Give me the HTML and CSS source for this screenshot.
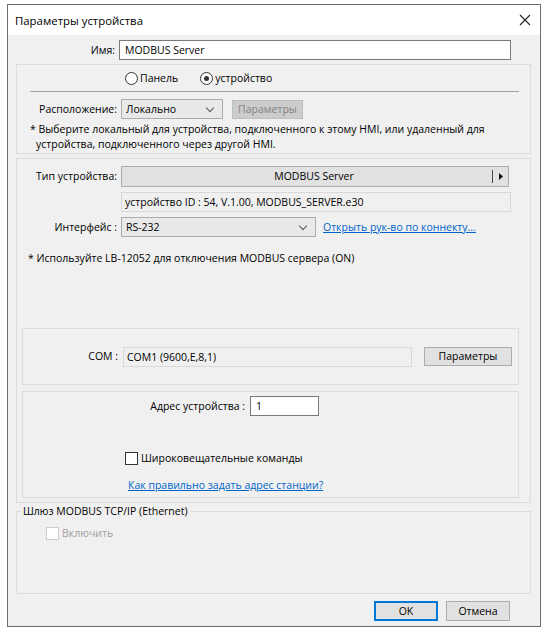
FILE: index.html
```html
<!DOCTYPE html>
<html lang="ru">

<head>
  <meta charset="UTF-8" />
  <title>Параметры устройства</title>
  <link rel="stylesheet" href="styles.css">
</head>

<body>

  <div class="window">
    <div class="titlebar">
      <span class="title">Параметры устройства</span>
      <svg class="close" width="12" height="12" viewBox="0 0 12 12">
        <path d="M1 1 L11 11 M11 1 L1 11" stroke="#222" stroke-width="1.1" fill="none" />
      </svg>
    </div>

    <div class="dialog-body">
      <div class="name-row">
        <label class="name-label">Имя:</label>
        <div class="textbox name-input">MODBUS Server</div>
      </div>

      <!-- location -->
      <div class="group group-location">
        <div class="radio-row">
          <span class="radio"></span><span class="radio-text">Панель</span>
          <span class="radio checked"></span><span class="radio-text">устройство</span>
        </div>
        <div class="separator"></div>
        <div class="loc-row">
          <span class="loc-label">Расположение:</span>
          <div class="combo loc-combo">Локально<span class="chev"></span></div>
          <div class="btn btn-disabled loc-btn">Параметры</div>
        </div>
        <p class="note loc-note">* Выберите локальный для устройства, подключенного к этому HMI, или удаленный для<br>устройства, подключенного через другой HMI.</p>
      </div>

      <!-- device -->
      <div class="group group-device">
        <div class="row type-row">
          <span class="field-label">Тип устройства:</span>
          <div class="btn type-btn">
            <span class="type-name">MODBUS Server</span>
            <span class="type-arrow">
              <svg width="4" height="7" viewBox="0 0 4 7"><path d="M0 0 L4 3.5 L0 7 Z" fill="#111" /></svg>
            </span>
          </div>
        </div>
        <div class="info-field device-info">устройство ID : 54, V.1.00, MODBUS_SERVER.e30</div>
        <div class="row iface-row">
          <span class="field-label">Интерфейс :</span>
          <div class="combo iface-combo">RS-232<span class="chev"></span></div>
          <a class="link iface-link" href="#">Открыть рук-во по коннекту...</a>
        </div>
        <p class="note lb-note">* Используйте LB-12052 для отключения MODBUS сервера (ON)</p>

        <div class="subgroup com-box">
          <span class="com-label">COM :</span>
          <div class="info-field com-field">COM1 (9600,E,8,1)</div>
          <div class="btn com-btn">Параметры</div>
        </div>

        <div class="subgroup addr-box">
          <div class="addr-row">
            <span class="addr-label">Адрес устройства :</span>
            <div class="textbox addr-input">1</div>
          </div>
          <div class="check-row">
            <span class="checkbox"></span><span>Широковещательные команды</span>
          </div>
          <a class="link addr-link" href="#">Как правильно задать адрес станции?</a>
        </div>
      </div>

      <!-- gateway -->
      <fieldset class="gateway">
        <legend>Шлюз MODBUS TCP/IP (Ethernet)</legend>
        <div class="check-row disabled">
          <span class="checkbox"></span><span>Включить</span>
        </div>
      </fieldset>

      <div class="footer">
        <div class="btn btn-default">OK</div>
        <div class="btn footer-btn">Отмена</div>
      </div>
    </div>
  </div>

</body>

</html>
```

FILE: styles.css
```css
body {
  margin: 0;
  background: #fff;
  font-family: "Open Sans", "Noto Sans", sans-serif;
  font-size: 10.5px;
  line-height: 15px;
  color: #000;
}

.window {
  margin: 4px 0 0 7px;
  width: 532px;
  height: 621px;
  border: 1px solid #6e6e6e;
  display: flex;
  flex-direction: column;
}

.titlebar {
  height: 30px;
  background: #fff;
  display: flex;
  align-items: center;
  justify-content: space-between;
  padding: 0 9px 0 7px;
}

.title {
  font-size: 11.4px;
}

.dialog-body {
  flex: 1;
  background: #f0f0f0;
  padding: 5px 9px 0 8px;
}

/* common controls */
.textbox {
  background: #fff;
  border: 1px solid #7a7a7a;
  height: 18px;
  line-height: 18px;
  padding-left: 5px;
}

.combo {
  position: relative;
  background: #e9e9e9;
  border: 1px solid #adadad;
  height: 18px;
  line-height: 19px;
  padding-left: 4px;
}

.chev {
  position: absolute;
  right: 9px;
  top: 5px;
  width: 5px;
  height: 5px;
  border-right: 1px solid #555;
  border-bottom: 1px solid #555;
  transform: rotate(45deg);
}

.btn {
  background: #e1e1e1;
  border: 1px solid #adadad;
  text-align: center;
  height: 17px;
  line-height: 17px;
}

.btn-disabled {
  background: #cccccc;
  border-color: #bfbfbf;
  color: #838383;
}

.link {
  color: #0066cc;
  text-decoration: underline;
}

.info-field {
  background: #f0f0f0;
  border: 1px solid #d9d9d9;
  height: 18px;
  line-height: 18px;
  padding-left: 3px;
}

.group,
.subgroup {
  border: 1px solid #dcdcdc;
}

.field-label {
  width: 100px;
  text-align: right;
  padding-right: 4px;
  flex-shrink: 0;
}

.note {
  margin: 0;
  line-height: 15px;
}

/* name row */
.name-row {
  display: flex;
  align-items: center;
  height: 20px;
}

.name-label {
  width: 99px;
  text-align: right;
  padding-right: 4px;
}

.name-input {
  width: 385px;
}

/* location group */
.group-location {
  margin-top: 4px;
  height: 88px;
}

.radio-row {
  display: flex;
  align-items: center;
  height: 22px;
  padding-left: 108px;
  margin-top: 2px;
}

.radio {
  width: 11px;
  height: 11px;
  border: 1px solid #333;
  border-radius: 50%;
  background: #fff;
  position: relative;
  margin-right: 2px;
}

.radio.checked::after {
  content: "";
  position: absolute;
  left: 3px;
  top: 3px;
  width: 5px;
  height: 5px;
  border-radius: 50%;
  background: #333;
}

.radio-text {
  margin-right: 22px;
}

.separator {
  height: 1px;
  background: #a0a0a0;
  margin: 2px 11px 0 13px;
}

.loc-row {
  display: flex;
  align-items: center;
  margin-top: 7px;
}

.loc-label {
  width: 100px;
  text-align: right;
  padding-right: 4px;
}

.loc-combo {
  width: 96px;
}

.loc-btn {
  width: 69px;
  margin-left: 9px;
}

.loc-note {
  margin-top: 3px;
  text-indent: -6px;
  padding-left: 19px;
}

/* device group */
.group-device {
  margin-top: 4px;
  height: 343px;
}

.row {
  display: flex;
  align-items: center;
}

.type-row {
  margin-top: 7px;
}

.type-btn {
  width: 386px;
  height: 19px;
  line-height: 19px;
  display: flex;
}

.type-name {
  flex: 1;
  padding-left: 14px;
}

.type-arrow {
  width: 15px;
  border-left: 1px solid #444;
  margin: 3px 0;
  display: flex;
  align-items: center;
  justify-content: center;
}

.device-info {
  margin: 5px 19px 0 104px;
}

.iface-row {
  margin-top: 5px;
}

.iface-combo {
  width: 189px;
}

.iface-link {
  margin-left: 7px;
}

.lb-note {
  margin-top: 14px;
  padding-left: 11px;
}

.com-box {
  margin: 62px 11px 0 5px;
  height: 55px;
  display: flex;
  align-items: center;
}

.com-label {
  width: 95px;
  text-align: right;
  padding-right: 5px;
}

.com-field {
  width: 284px;
}

.com-btn {
  width: 86px;
  margin-left: 12px;
}

.addr-box {
  margin: 6px 11px 0 5px;
  height: 105px;
}

.addr-row {
  display: flex;
  align-items: center;
  margin-top: 4px;
}

.addr-label {
  width: 222px;
  text-align: right;
  padding-right: 5px;
}

.addr-input {
  width: 62px;
}

.check-row {
  display: flex;
  align-items: center;
  margin-top: 35px;
  padding-left: 102px;
}

.checkbox {
  width: 11px;
  height: 11px;
  border: 1px solid #333;
  background: #fff;
  margin-right: 3px;
}

.addr-link {
  display: block;
  margin: 12px 0 0 105px;
}

/* gateway */
.gateway {
  box-sizing: border-box;
  margin: 1px 0 0;
  padding: 0;
  border: 1px solid #dcdcdc;
  height: 90px;
}

.gateway legend {
  margin-left: 4px;
  padding: 0 2px;
}

.gateway .check-row {
  margin-top: 7px;
  padding-left: 29px;
}

.check-row.disabled {
  color: #a0a0a0;
}

.check-row.disabled .checkbox {
  border-color: #cccccc;
}

/* footer */
.footer {
  display: flex;
  justify-content: flex-end;
  margin-top: 7px;
  padding-right: 21px;
}

.footer .btn {
  width: 62px;
  height: 18px;
  line-height: 18px;
}

.btn-default {
  border: 1px solid #0078d7;
  box-shadow: inset 0 0 0 1px #0078d7;
  margin-right: 8px;
}
```
